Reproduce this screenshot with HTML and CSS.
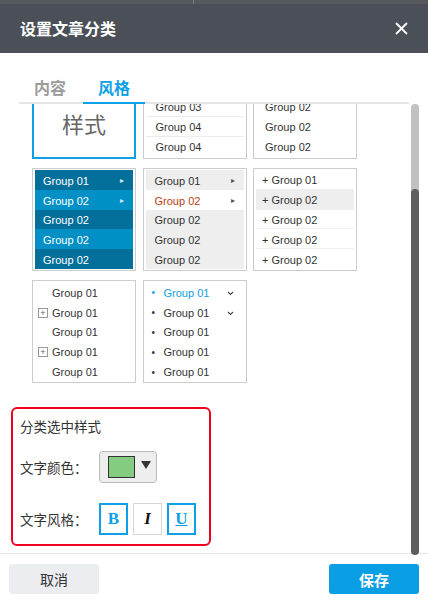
FILE: index.html
```html
<!DOCTYPE html>
<html lang="zh-CN">
<head>
    <title>设置文章分类</title>
    <meta charset="UTF-8">
    <meta name="viewport" content="width=device-width, initial-scale=1.0">
    <link rel="stylesheet" href="styles.css">
</head>
<body>
<div class="dialog">
    <div class="strip"><span class="strip-line"></span></div>

    <div class="header">
        <h1 class="title">设置文章分类</h1>
        <svg class="close" width="13" height="13" viewBox="0 0 13 13">
            <path d="M1 1L12 12M12 1L1 12" stroke="#fff" stroke-width="1.8" fill="none"/>
        </svg>
    </div>

    <div class="tabs">
        <div class="tab">内容</div>
        <div class="tab active">风格</div>
    </div>

    <div class="main">
        <div class="scroller">
            <div class="grid">
                <!-- row 1 -->
                <div class="card card-big selected">
                    <div class="big-text">样式</div>
                </div>
                <div class="card list-lines">
                    <div class="item">Group 03</div>
                    <div class="item">Group 04</div>
                    <div class="item">Group 04</div>
                </div>
                <div class="card list-plain">
                    <div class="item">Group 02</div>
                    <div class="item">Group 02</div>
                    <div class="item">Group 02</div>
                </div>

                <!-- row 2 -->
                <div class="card list-blue">
                    <div class="item">Group 01<span class="arrow">&#9656;</span></div>
                    <div class="item">Group 02<span class="arrow">&#9656;</span></div>
                    <div class="item">Group 02</div>
                    <div class="item">Group 02</div>
                    <div class="item">Group 02</div>
                </div>
                <div class="card list-gray">
                    <div class="item">Group 01<span class="arrow">&#9656;</span></div>
                    <div class="item on">Group 02<span class="arrow">&#9656;</span></div>
                    <div class="item">Group 02</div>
                    <div class="item">Group 02</div>
                    <div class="item">Group 02</div>
                </div>
                <div class="card list-plus">
                    <div class="item">+ Group 01</div>
                    <div class="item on">+ Group 02</div>
                    <div class="item">+ Group 02</div>
                    <div class="item">+ Group 02</div>
                    <div class="item">+ Group 02</div>
                </div>

                <!-- row 3 -->
                <div class="card list-tree">
                    <div class="item">Group 01</div>
                    <div class="item"><span class="plus-box">+</span>Group 01</div>
                    <div class="item">Group 01</div>
                    <div class="item"><span class="plus-box">+</span>Group 01</div>
                    <div class="item">Group 01</div>
                </div>
                <div class="card list-dots">
                    <div class="item on"><span class="dot">&bull;</span>Group 01
                        <svg class="chev" width="7" height="5" viewBox="0 0 7 5"><path d="M1 1L3.5 3.5L6 1" stroke="#444" stroke-width="1.1" fill="none"/></svg>
                    </div>
                    <div class="item"><span class="dot">&bull;</span>Group 01
                        <svg class="chev" width="7" height="5" viewBox="0 0 7 5"><path d="M1 1L3.5 3.5L6 1" stroke="#444" stroke-width="1.1" fill="none"/></svg>
                    </div>
                    <div class="item"><span class="dot">&bull;</span>Group 01</div>
                    <div class="item"><span class="dot">&bull;</span>Group 01</div>
                    <div class="item"><span class="dot">&bull;</span>Group 01</div>
                </div>
            </div>

            <div class="settings">
                <div class="settings-title">分类选中样式</div>
                <div class="row">
                    <span class="label">文字颜色：</span>
                    <div class="picker">
                        <span class="swatch"></span>
                        <span class="caret"></span>
                    </div>
                </div>
                <div class="row row-style">
                    <span class="label">文字风格：</span>
                    <div class="fmt on b">B</div>
                    <div class="fmt i">I</div>
                    <div class="fmt on u">U</div>
                </div>
            </div>
        </div>

        <div class="bar"><div class="thumb"></div></div>
    </div>

    <div class="footer">
        <button class="btn cancel">取消</button>
        <button class="btn save">保存</button>
    </div>
</div>
</body>
</html>
```

FILE: styles.css
```css
:root{
    --blue: #0ea0e4;
    --head: #4b4f58;
    --line: #e6e6e6;
    --text: #333333;
}

html, body{
    margin: 0;
    padding: 0;
    background: #ffffff;
    font-family: "Noto Sans CJK SC", "Liberation Sans", sans-serif;
    color: var(--text);
}

.dialog{
    width: 428px;
    height: 602px;
    display: flex;
    flex-direction: column;
    overflow: hidden;
}

.strip{
    height: 4px;
    background: #56595f;
    flex: none;
}

.strip-line{
    display: block;
    margin-left: 193px;
    width: 1px;
    height: 4px;
    background: #7b7e83;
}

.header{
    height: 49px;
    flex: none;
    background: var(--head);
    display: flex;
    align-items: center;
    justify-content: space-between;
    padding: 0 20px 0 20px;
}

.title{
    margin: 0;
    font-size: 16px;
    font-weight: bold;
    color: #ffffff;
    line-height: 20px;
    margin-top: -2px;
}

.tabs{
    height: 51px;
    flex: none;
    box-sizing: border-box;
    margin: 0 19px;
    border-bottom: 2px solid var(--line);
    display: flex;
    align-items: flex-end;
    gap: 2px;
}

.tab{
    width: 62px;
    text-align: center;
    font-size: 16px;
    font-weight: bold;
    line-height: 22px;
    color: #9b9b9b;
    padding-bottom: 4px;
    margin-bottom: -2px;
    border-bottom: 2px solid transparent;
}

.tab.active{
    color: var(--blue);
    border-bottom-color: var(--blue);
}

.main{
    height: 449px;
    flex: none;
    display: flex;
    border-bottom: 1px solid var(--line);
}

.scroller{
    flex: 1;
    overflow: hidden;
    padding-left: 11px;
}

.bar{
    width: 8px;
    margin: 0 9px 0 0;
    background: #c1c1c1;
    border-radius: 4px 4px 0 0;
    display: flex;
    flex-direction: column;
    justify-content: flex-end;
}

.thumb{
    height: 366px;
    background: #5e5e5e;
    border-radius: 4px;
    margin-bottom: -2px;
}

.grid{
    margin: -48px 0 0 21px;
    display: grid;
    grid-template-columns: repeat(3, 104px);
    column-gap: 6.5px;
    row-gap: 9px;
}

.card{
    height: 103px;
    box-sizing: border-box;
    border: 1px solid #cccccc;
    padding: 1px 2px;
    font-family: "Liberation Sans", Arial, sans-serif;
    font-size: 11px;
    display: flex;
    flex-direction: column;
}

.item{
    height: 20px;
    flex: none;
    display: flex;
    align-items: center;
    position: relative;
    box-sizing: border-box;
}

.card-big{
    border: 2px solid var(--blue);
    align-items: center;
    justify-content: flex-end;
    padding-bottom: 19px;
}

.big-text{
    font-family: "Noto Sans CJK SC", sans-serif;
    font-size: 22px;
    line-height: 30px;
    color: #666666;
}

.list-lines,
.list-plain{
    justify-content: flex-end;
}

.list-lines .item{
    padding-left: 10px;
    border-bottom: 1px solid #ececec;
}

.list-lines .item:last-child{
    border-bottom: none;
}

.list-plain .item{
    padding-left: 9px;
}

.list-blue .item,
.list-gray .item,
.list-plus .item,
.list-tree .item,
.list-dots .item{
    height: 19.8px;
    padding-top: 2px;
}

.list-blue .item{
    background: #036f9b;
    color: #ffffff;
    padding-left: 8px;
}

.list-blue .item:nth-child(even){
    background: #0090c6;
}

.arrow{
    position: absolute;
    right: 9px;
    font-size: 8px;
    color: #cfe6f0;
}

.list-gray .item{
    background: #eeeeee;
    padding-left: 9px;
}

.list-gray .item.on{
    background: #ffffff;
    color: #b8400f;
}

.list-gray .arrow{
    color: #555555;
}

.list-plus .item{
    padding-left: 6px;
    border-bottom: 1px solid #eeeeee;
}

.list-plus .item:last-child{
    border-bottom: none;
}

.list-plus .item.on{
    background: #eeeeee;
}

.list-tree .item{
    padding-left: 17px;
}

.plus-box{
    position: absolute;
    left: 3px;
    width: 8px;
    height: 8px;
    border: 1px solid #999999;
    font-size: 9px;
    line-height: 8px;
    text-align: center;
    color: #666666;
}

.list-dots .item{
    padding-left: 18px;
}

.dot{
    position: absolute;
    left: 6px;
    font-size: 10px;
}

.list-dots .item.on{
    color: var(--blue);
}

.chev{
    position: absolute;
    right: 10px;
    top: 9px;
}

.settings{
    width: 200px;
    box-sizing: border-box;
    margin-top: 24px;
    border: 2px solid #f2001f;
    border-radius: 6px;
    padding: 7px 7px 9px 7px;
    font-size: 13px;
}

.settings-title{
    line-height: 20px;
    margin-bottom: 15px;
    font-size: 13.5px;
}

.row{
    display: flex;
    align-items: center;
    height: 32px;
}

.row-style{
    margin-top: 20px;
}

.label{
    width: 79px;
    flex: none;
    font-size: 13.5px;
}

.picker{
    width: 58px;
    height: 32px;
    box-sizing: border-box;
    border: 1px solid #bbbbbb;
    border-radius: 4px;
    background: #eeeeee;
    display: flex;
    align-items: center;
    padding-left: 8px;
}

.swatch{
    width: 27px;
    height: 22px;
    box-sizing: border-box;
    border: 1px solid #333333;
    background: #84cc80;
}

.caret{
    margin-left: 6px;
    margin-top: -4px;
    width: 0;
    height: 0;
    border-left: 5px solid transparent;
    border-right: 5px solid transparent;
    border-top: 8px solid #333333;
}

.fmt{
    width: 29px;
    height: 32px;
    box-sizing: border-box;
    border: 1px solid #d6d6d6;
    margin-right: 5px;
    display: flex;
    align-items: center;
    justify-content: center;
    font-family: "Liberation Serif", "Times New Roman", serif;
    font-weight: bold;
    font-size: 17px;
    color: #111111;
}

.fmt.on{
    border: 2px solid var(--blue);
    color: var(--blue);
}

.fmt.i{
    font-style: italic;
}

.fmt.u{
    text-decoration: underline;
}

.footer{
    flex: 1;
    display: flex;
    justify-content: space-between;
    align-items: flex-start;
    padding: 10px 9px 0 9px;
}

.btn{
    width: 90px;
    height: 30px;
    border: none;
    border-radius: 3px;
    font-family: "Noto Sans CJK SC", sans-serif;
    font-size: 14px;
    padding: 0;
}

.cancel{
    background: #ebedf0;
    color: #333333;
}

.save{
    background: #0a9ee4;
    color: #ffffff;
    font-size: 15px;
    font-weight: bold;
}
```
